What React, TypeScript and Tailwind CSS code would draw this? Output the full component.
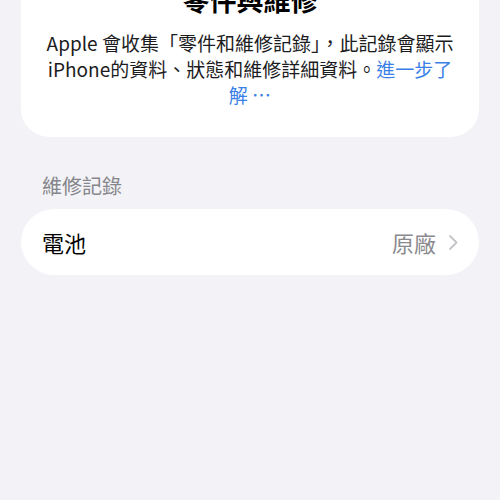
export default function App() {
  return (
    <div
      className="w-[500px] h-[500px] overflow-hidden bg-[#f2f2f7]"
      style={{ fontFamily: '"Noto Sans CJK TC", "Noto Sans", sans-serif' }}
    >
      <div className="mx-[21px] -mt-[28px] rounded-[28px] bg-white px-[20px] pb-[29px] pt-[10px] text-center">
        <div className="text-[27px] font-bold leading-[36px] text-black">零件與維修</div>
        <p className="mt-[12px] text-[19px] leading-[26px] text-[#1c1c1e]">
          Apple 會收集「零件和維修記錄」，此記錄會顯示
          <br />
          iPhone的資料、狀態和維修詳細資料。
          <span className="text-[#3a7fe6]">
            進一步了
            <br />解 …
          </span>
        </p>
      </div>

      <div className="mt-[36px] px-[42px] text-[20px] leading-[26px] text-[#86868b]">維修記錄</div>

      <div className="mx-[21px] mt-[10px] flex h-[66px] items-center rounded-[33px] bg-white pl-[21px] pr-[21px]">
        <span className="text-[22px] text-black">電池</span>
        <span className="ml-auto text-[22px] text-[#8a8a8e]">原廠</span>
        <svg className="ml-[12px]" width="10" height="17" viewBox="0 0 10 17" fill="none">
          <path d="M2 2l6.5 6.5L2 15" stroke="#c4c4c8" strokeWidth="1.8" strokeLinecap="round" strokeLinejoin="round" />
        </svg>
      </div>
    </div>
  );
}
